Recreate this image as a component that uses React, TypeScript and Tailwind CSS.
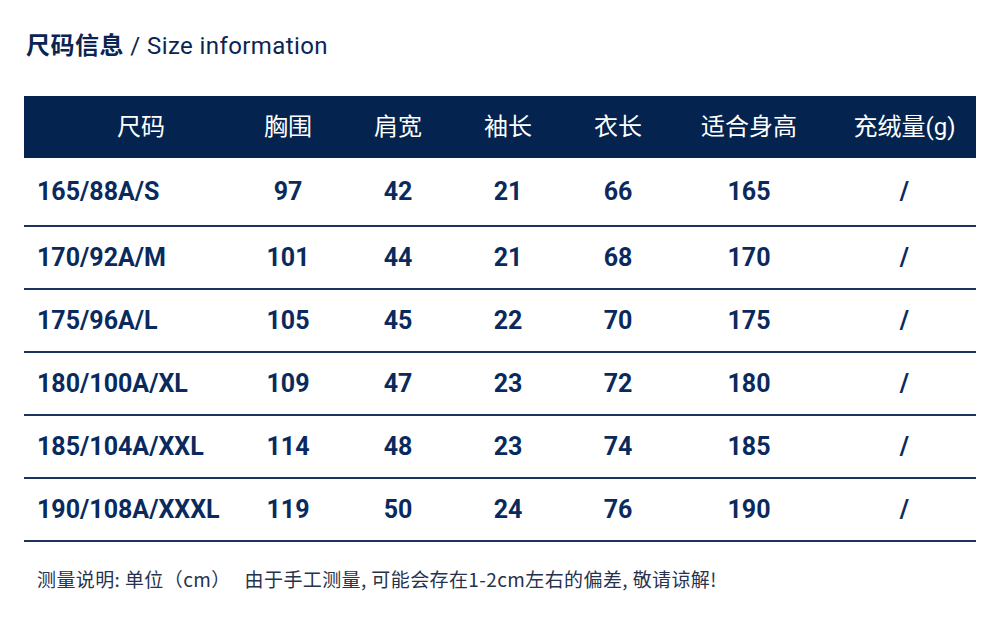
const rows = [
  ["165/88A/S", "97", "42", "21", "66", "165", "/"],
  ["170/92A/M", "101", "44", "21", "68", "170", "/"],
  ["175/96A/L", "105", "45", "22", "70", "175", "/"],
  ["180/100A/XL", "109", "47", "23", "72", "180", "/"],
  ["185/104A/XXL", "114", "48", "23", "74", "185", "/"],
  ["190/108A/XXXL", "119", "50", "24", "76", "190", "/"],
];

const heads = ["胸围", "肩宽", "袖长", "衣长", "适合身高", "充绒量(g)"];

const cols = "grid grid-cols-[209px_110px_110px_110px_110px_152px_1fr]";

export default function App() {
  return (
    <div
      className="w-[1000px] h-[635px] bg-white overflow-hidden"
      style={{ fontFamily: 'Roboto, "Noto Sans CJK SC", sans-serif' }}
    >
      {/* 标题 */}
      <div className="pl-[26px] pt-[31px] h-[96px] text-[#0c2550] text-[24px] leading-[30px]">
        <span className="font-bold tracking-[0.5px]">尺码信息</span>
        <span className="font-normal tracking-[0.4px]"> / Size information</span>
      </div>

      <div className="mx-[24px]">
        {/* 表头 */}
        <div className={`${cols} h-[62px] bg-[#04234f] text-white text-[24px] items-center`}>
          <div className="pl-[93px]">尺码</div>
          {heads.map((h, j) => (
            <div key={h} className={j === 5 ? "text-center pl-[8px]" : "text-center"}>
              {h}
            </div>
          ))}
        </div>

        {/* 数据 */}
        {rows.map((r, i) => (
          <div
            key={r[0]}
            className={`${cols} ${i === 0 ? "h-[69px]" : "h-[63px]"} items-center border-b-2 border-[#1b345f] text-[#0a2a5e] text-[25px] font-bold`}
          >
            {r.map((c, j) => (
              <div
                key={j}
                className={j === 0 ? "pl-[13px]" : j === 6 ? "text-center pl-[8px]" : "text-center"}
              >
                {c}
              </div>
            ))}
          </div>
        ))}
      </div>

      <div
        className="pl-[37px] pt-[23px] text-[19px] tracking-[0.4px] text-[#26334d]"
        style={{ fontFamily: '"Noto Sans CJK SC", sans-serif' }}
      >
        测量说明: 单位（cm）&nbsp;&nbsp;&nbsp;由于手工测量, 可能会存在1-2cm左右的偏差, 敬请谅解!
      </div>
    </div>
  );
}
